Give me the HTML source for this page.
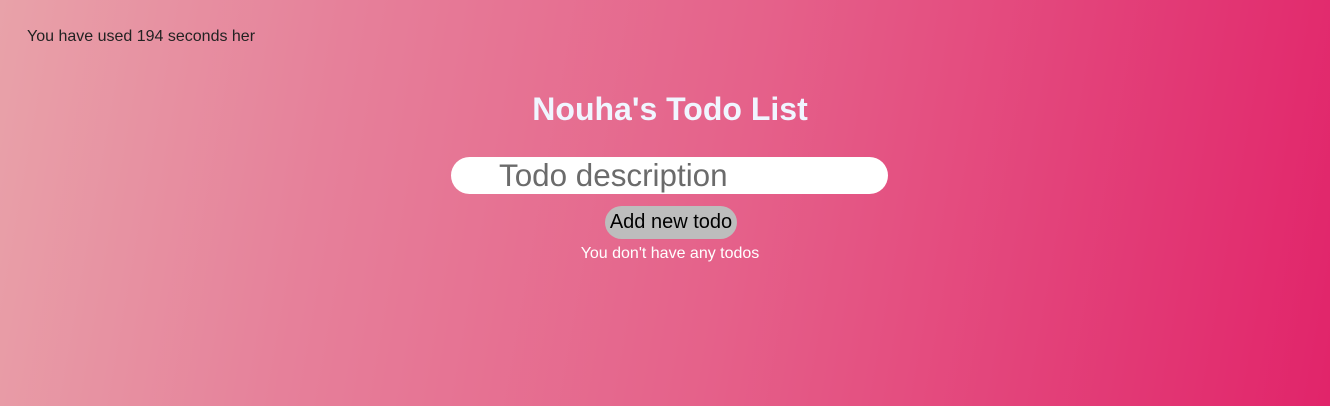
<!DOCTYPE html>
<html><head><style>
html,body{margin:0;padding:0;width:1330px;height:406px;overflow:hidden}
body{background:linear-gradient(100deg,#e8a2a9 0%,#e6809a 25%,#e5618a 55%,#e1246a 100%);font-family:"Liberation Sans",Arial,sans-serif;position:relative}
.t{position:absolute;left:27px;top:28px;font-size:16px;color:#222}
h1{position:absolute;left:0;width:1340px;text-align:center;top:91px;margin:0;font-size:32px;font-weight:bold;color:#f0f6ff}
.in{position:absolute;left:451px;top:157px;width:437px;height:37px;background:#fff;border-radius:19px}
.in span{position:absolute;left:48px;top:0;line-height:37px;font-size:31.4px;color:#6b6b6b}
.b{position:absolute;left:605px;top:206px;width:132px;height:33px;background:#bdbdbd;border-radius:17px;text-align:center;line-height:33px;font-size:20px;color:#000}
.n{position:absolute;left:0;width:1340px;text-align:center;top:245px;font-size:16px;color:#fff}
</style></head><body>
<div class="t">You have used 194 seconds her</div>
<h1>Nouha's Todo List</h1>
<div class="in"><span>Todo description</span></div>
<div class="b">Add new todo</div>
<div class="n">You don't have any todos</div>
</body></html>
